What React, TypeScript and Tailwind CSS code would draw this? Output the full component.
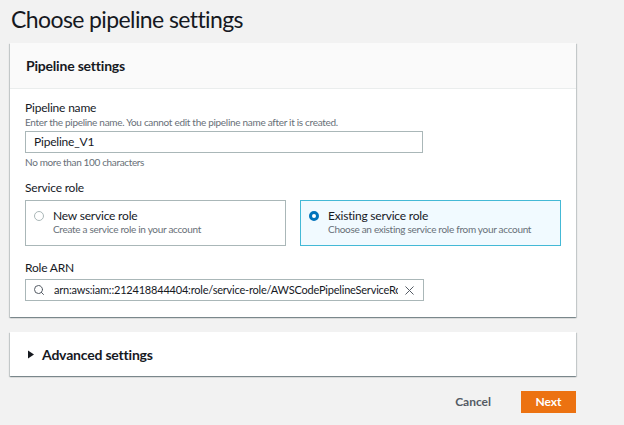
import { Search, X } from 'lucide-react';

const cardShadow =
  'shadow-[0_1px_1px_0_rgba(0,28,36,0.3),1px_1px_1px_0_rgba(0,28,36,0.15),-1px_1px_1px_0_rgba(0,28,36,0.15)]';

export default function App() {
  return (
    <div
      className="min-h-[425px] w-[624px] bg-[#f2f2f2] text-[#16191f]"
      style={{ fontFamily: 'Lato, "Open Sans", sans-serif' }}
    >
      <div className="w-[576px] pl-[10px] pt-[4px]">
        <h1 className="pl-[1px] text-[23px] leading-[30px] tracking-[-0.6px]">Choose pipeline settings</h1>

        {/* Pipeline settings card */}
        <div className={`mt-[9px] bg-white ${cardShadow}`}>
          <div className="flex h-[46px] items-center border-b border-[#eaeded] bg-[#fafafa] pl-[16px]">
            <h2 className="text-[14px] font-bold tracking-[-0.2px]">Pipeline settings</h2>
          </div>
          <div className="pb-[16px] pl-[15px] pt-[11px]">
            <div className="text-[12px] leading-[16px] tracking-[-0.2px]">Pipeline name</div>
            <div className="text-[10px] leading-[12px] tracking-[-0.3px] text-[#687078]">
              Enter the pipeline name. You cannot edit the pipeline name after it is created.
            </div>
            <div className="mt-[3px] flex h-[22px] w-[398px] items-center border border-[#aab7b8] bg-white pl-[8px] text-[12px] tracking-[-0.2px]">
              Pipeline_V1
            </div>
            <div className="mt-[3px] text-[10px] leading-[12px] tracking-[-0.35px] text-[#687078]">No more than 100 characters</div>

            <div className="mt-[12px] text-[12px] leading-[16px] tracking-[-0.2px]">Service role</div>
            <div className="mt-[4px] flex gap-[14px]">
              <div className="flex h-[46px] w-[261px] items-start gap-[9px] border border-[#aab7b8] pl-[8px] pt-[7px]">
                <span className="mt-[3px] h-[10px] w-[10px] rounded-full border border-[#aab7b8] bg-white" />
                <div>
                  <div className="text-[12px] leading-[15px] tracking-[-0.2px]">New service role</div>
                  <div className="text-[10px] leading-[13px] tracking-[-0.3px] text-[#687078]">Create a service role in your account</div>
                </div>
              </div>
              <div className="flex h-[46px] w-[261px] items-start gap-[9px] border border-[#44b9d6] bg-[#f1faff] pl-[8px] pt-[7px]">
                <span className="mt-[3px] h-[10px] w-[10px] rounded-full border-[3px] border-[#0073bb] bg-white" />
                <div>
                  <div className="text-[12px] leading-[15px] tracking-[-0.2px]">Existing service role</div>
                  <div className="text-[10px] leading-[13px] tracking-[-0.3px] text-[#687078]">Choose an existing service role from your account</div>
                </div>
              </div>
            </div>

            <div className="mt-[14px] text-[12px] leading-[16px] tracking-[-0.2px]">Role ARN</div>
            <div className="mt-[3px] flex h-[22px] w-[399px] items-center border border-[#aab7b8] bg-white pl-[7px] pr-[6px]">
              <Search className="h-[12px] w-[12px] text-[#545b64]" strokeWidth={2} />
              <span className="ml-[9px] flex-1 overflow-hidden whitespace-nowrap text-[11px] tracking-[-0.2px]">
                arn:aws:iam::212418844404:role/service-role/AWSCodePipelineServiceRole
              </span>
              <X className="ml-[4px] h-[15px] w-[15px] text-[#545b64]" strokeWidth={1.6} />
            </div>
          </div>
        </div>

        {/* Advanced settings card */}
        <div className={`mt-[15px] flex h-[44px] items-center bg-white pl-[17px] ${cardShadow}`}>
          <svg width="8" height="9" viewBox="0 0 8 9" className="mr-[7px]">
            <path d="M1 0.5 L7 4.5 L1 8.5 Z" fill="#16191f" />
          </svg>
          <span className="text-[14px] font-bold tracking-[-0.2px]">Advanced settings</span>
        </div>

        <div className="mt-[15px] flex items-center justify-end gap-[30px]">
          <span className="text-[12px] font-bold text-[#545b64]">Cancel</span>
          <div className="flex h-[22px] w-[55px] items-center justify-center bg-[#ec7211] text-[12px] font-bold text-white">
            Next
          </div>
        </div>
      </div>
    </div>
  );
}
